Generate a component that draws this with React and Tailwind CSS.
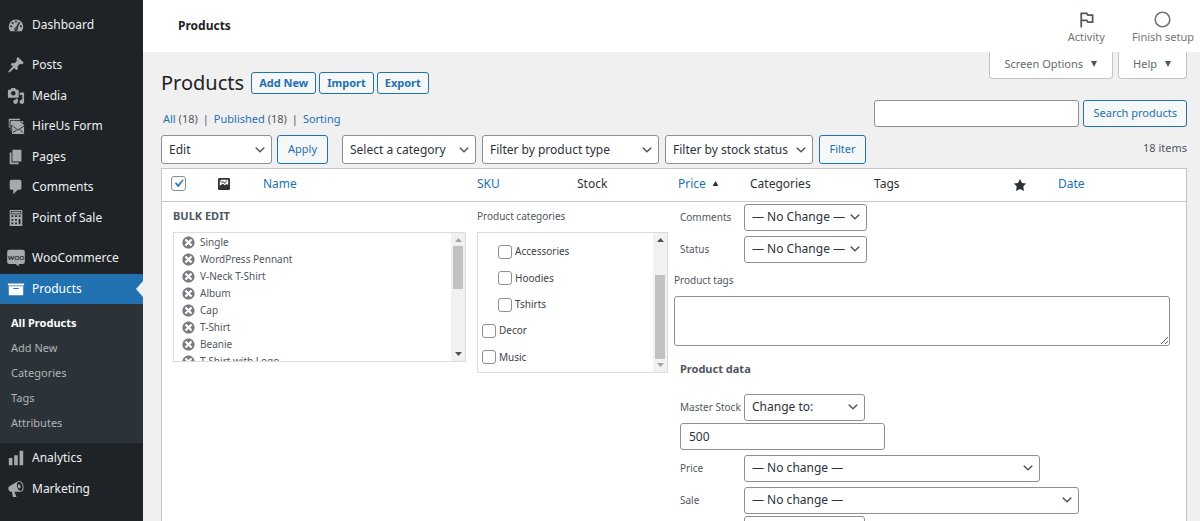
import React from "react";

const Svg = ({ className = "", children, box = "0 0 20 20" }) => (
  <svg viewBox={box} className={"shrink-0 " + className} fill="currentColor" aria-hidden="true">
    {children}
  </svg>
);

const icons = {
  dashboard: (
    <g>
      <path d="M3.760 17h12.480c1.100-1.370 1.760-3.110 1.760-5 0-4.420-3.580-8-8-8s-8 3.580-8 8c0 1.890.66 3.630 1.760 5z" />
      <g fill="#1d2327">
        <circle cx="10" cy="6.200" r="1.100" />
        <circle cx="6.300" cy="7.800" r="1.100" />
        <circle cx="4.600" cy="11.500" r="1.100" />
        <circle cx="15.400" cy="11.500" r="1.100" />
        <path d="M13.200 6.300l1.300.7-2.700 6.400a2 2 0 11-1.700-.9z" />
      </g>
      <circle cx="10" cy="14.300" r=".8" />
    </g>
  ),
  post: (
    <path d="M10.44 3.02l1.82-1.82 6.36 6.35-1.83 1.82c-1.05-.68-2.48-.57-3.41.36l-.75.75c-.92.93-1.04 2.35-.35 3.41l-1.83 1.82-2.41-2.41-2.8 2.79c-.42.42-3.38 2.71-3.8 2.29s1.86-3.39 2.28-3.81l2.79-2.79L4.1 9.36l1.83-1.82c1.05.69 2.48.57 3.4-.36l.75-.75c.93-.92 1.05-2.35.36-3.41z" />
  ),
  media: (
    <path d="M13 11V4c0-.55-.45-1-1-1h-1.67L9 1H5L3.67 3H2c-.55 0-1 .45-1 1v7c0 .55.45 1 1 1h10c.55 0 1-.45 1-1zM7 4.5c1.38 0 2.5 1.12 2.5 2.5S8.38 9.5 7 9.5 4.500 8.380 4.500 7 5.620 4.500 7 4.500zM14 6h5v10.500c0 1.380-1.120 2.500-2.500 2.500S14 17.880 14 16.500s1.120-2.500 2.500-2.500c.17 0 .34.02.5.05V9h-3V6zm-4 8.050V13h2v3.500c0 1.380-1.120 2.500-2.500 2.500S7 17.880 7 16.500 8.120 14 9.500 14c.17 0 .34.02.5.05z" />
  ),
  form: (
    <g>
      <path d="M2 2h12.500v2.500H18V8h1v11H5.500v-3.500H4V12H2z" />
      <g fill="none" stroke="#1d2327" strokeWidth="1">
        <path d="M3.500 12V4h11" />
        <path d="M5.500 15.500L5 9.500l4-2M15 4.500l3.500 4" />
        <path d="M7 10.500l5 4 7-4.500M6.500 17.500l4-3M18 17.500l-4-3.500" />
      </g>
      <path d="M4.500 5l3-1 9 6-4 3.500-8-6z" />
    </g>
  ),
  page: <path d="M6 15V2h10v13H6zm-1 1h8v2H3V5h2v11z" />,
  comments: (
    <path d="M5 2h9c1.1 0 2 .9 2 2v7c0 1.1-.9 2-2 2h-2l-5 5v-5H5c-1.1 0-2-.9-2-2V4c0-1.1.9-2 2-2z" />
  ),
  calculator: (
    <path
      fillRule="evenodd"
      d="M3 1h14v18H3zM4.200 2.200v3.600h11.600V2.200zM5 3h10v2H5zM5 7v2h2V7zm4 0v2h2V7zm4 0v2h2V7zM5 11v2h2v-2zm4 0v2h2v-2zm4 0v6h2v-6zM5 15v2h2v-2zm4 0v2h2v-2z"
    />
  ),
  woo: (
    <g>
      <path d="M2.500 .8h15a2.300 2.300 0 012.300 2.300v11.400a2.300 2.300 0 01-2.300 2.300h-4.700l.9 2.700-4.500-2.700H2.500A2.300 2.300 0 01.2 14.500V3.100A2.300 2.300 0 012.500.8z" />
      <text x="10" y="11.800" textAnchor="middle" fontSize="7" fontWeight="700" fill="#1d2327" fontFamily="Lato, sans-serif">
        WOO
      </text>
    </g>
  ),
  archive: <path d="M19 4v2H1V4h18zM2 7h16v10H2V7zm11 3V9H7v1h6z" />,
  chart: <path d="M18 18V2h-4v16h4zm-6 0V7H8v11h4zm-6 0v-8H2v8h4z" />,
  megaphone: (
    <path d="M18.15 5.94c.46 1.62.38 3.22-.02 4.48-.42 1.28-1.26 2.18-2.3 2.48-.16.06-.26.06-.4.06-.06.02-.12.02-.18.02-.06.02-.14.02-.22.02h-6.8l2.22 5.5c.02.14-.06.26-.14.34-.08.1-.24.16-.34.16H6.95c-.1 0-.26-.06-.34-.16-.08-.08-.16-.2-.14-.34l-1-5.5H4.25l-.02-.02c-.5.06-1.08-.18-1.54-.62s-.88-1.08-1.06-1.88c-.24-.8-.2-1.56-.02-2.2.18-.62.58-1.08 1.06-1.3l.02-.02 9-5.4c.1-.06.18-.1.24-.16.06-.04.14-.08.24-.12.16-.08.28-.12.5-.18 1.04-.3 2.24.1 3.22.98s1.84 2.24 2.26 3.86zm-2.58 5.98h-.02c.4-.1.74-.34 1.04-.7.58-.7.86-1.76.86-3.04 0-.64-.1-1.3-.28-1.98-.34-1.36-1.02-2.5-1.78-3.24s-1.68-1.1-2.46-.88c-.82.22-1.4.96-1.7 2-.32 1.04-.28 2.36.06 3.72.38 1.36 1 2.5 1.8 3.24.78.74 1.62 1.1 2.48.88zm-2.54-7.08c.22-.04.42-.02.62.04.38.16.76.48 1.02 1s.42 1.2.42 1.78c0 .3-.04.56-.12.8-.18.48-.44.84-.86.94-.34.1-.8-.06-1.14-.4s-.64-.86-.78-1.5c-.18-.62-.12-1.24.02-1.72s.48-.84.82-.94z" />
  ),
};

function NavItem({ icon, label, active }) {
  return (
    <a
      href="#"
      className={
        "relative flex flex-1 items-center gap-[7px] pl-[7px] text-[12px] " +
        (active ? "bg-[#2271b1] text-white" : "text-[#f0f0f1]")
      }
    >
      <Svg className={"size-[18px] " + (active ? "text-white" : "text-[#a7aaad]")}>{icons[icon]}</Svg>
      <span>{label}</span>
      {active && (
        <svg viewBox="0 0 7 16" className="absolute right-0 h-4 w-[7px]" aria-hidden="true">
          <path d="M7 0v16L0 8z" fill="#f0f0f1" />
        </svg>
      )}
    </a>
  );
}

function Sidebar() {
  return (
    <nav className="w-[143px] shrink-0 bg-[#1d2327] pt-[10px]">
      <div className="flex h-[30px] flex-col">
        <NavItem icon="dashboard" label="Dashboard" />
      </div>
      <div className="mt-[10px] flex h-[183px] flex-col">
        <NavItem icon="post" label="Posts" />
        <NavItem icon="media" label="Media" />
        <NavItem icon="form" label="HireUs Form" />
        <NavItem icon="page" label="Pages" />
        <NavItem icon="comments" label="Comments" />
        <NavItem icon="calculator" label="Point of Sale" />
      </div>
      <div className="mt-[10px] flex h-[61px] flex-col">
        <NavItem icon="woo" label="WooCommerce" />
        <NavItem icon="archive" label="Products" active />
      </div>
      <ul className="bg-[#2c3338] pt-[6px] pb-[8px] text-[11px] leading-[25px] text-[#b1b5b9]">
        <li>
          <a href="#" className="block pl-[11px] font-bold text-white">All Products</a>
        </li>
        {["Add New", "Categories", "Tags", "Attributes"].map((t) => (
          <li key={t}>
            <a href="#" className="block pl-[11px]">{t}</a>
          </li>
        ))}
      </ul>
      <div className="flex h-[61px] flex-col">
        <NavItem icon="chart" label="Analytics" />
        <NavItem icon="megaphone" label="Marketing" />
      </div>
    </nav>
  );
}

function Select({ id, label, value, className = "", height = "h-[27px]" }) {
  return (
    <span className={"relative inline-flex items-center " + height + " " + className}>
      <select
        id={id}
        aria-label={label}
        className="h-full w-full appearance-none rounded-[3px] border border-[#8c8f94] bg-white pr-5 pl-[7px] text-[12px] text-[#2c3338]"
      >
        <option>{value}</option>
      </select>
      <svg viewBox="0 0 20 20" className="pointer-events-none absolute right-[5px] size-[14px]" aria-hidden="true">
        <path d="M5 6l5 5 5-5 2 1-7 7-7-7 2-1z" fill="#50575e" />
      </svg>
    </span>
  );
}

const btn = "rounded-[3px] border border-[#2271b1] bg-[#f6f7f7] text-[11px] text-[#2271b1]";

function PageHeader() {
  return (
    <header className="flex h-[52px] shrink-0 items-center justify-between bg-white pr-[6px] pl-[35px]">
      <h2 className="text-[12px] font-bold text-[#1d2327]">Products</h2>
      <div className="flex gap-[27px] text-[11px] leading-[14px] text-[#757575]">
        <button className="flex flex-col items-center">
          <Svg box="0 0 24 24" className="size-[21px] text-[#50575e]">
            <path d="M14 6l-1-2H5v17h2v-7h5l1 2h7V6h-6zm4 8h-4l-1-2H7V6h5l1 2h5v6z" />
          </Svg>
          Activity
        </button>
        <button className="flex flex-col items-center">
          <svg viewBox="0 0 21 21" className="size-[21px]" aria-hidden="true">
            <circle cx="10.500" cy="10.500" r="7.300" fill="none" stroke="#757575" strokeWidth="1.600" />
          </svg>
          Finish setup
        </button>
      </div>
    </header>
  );
}

function MetaTab({ children }) {
  return (
    <button className="flex h-[27px] items-center gap-[7px] rounded-b-[4px] border border-t-0 border-[#c3c4c7] bg-white px-[14px] pb-[2px] text-[11px] text-[#646970]">
      {children}
      <svg viewBox="0 0 8 7" className="h-[6px] w-[8px]" aria-hidden="true">
        <path d="M.5 0h7L4 7z" fill="#50575e" />
      </svg>
    </button>
  );
}

function Heading() {
  return (
    <div className="flex items-start justify-between">
      <div className="pt-5">
        <div className="flex h-[22px] items-center gap-[7px]">
          <h1 className="text-[20px] leading-[22px] text-[#1d2327]">Products</h1>
          <div className="flex gap-[3px]">
            {["Add New", "Import", "Export"].map((t) => (
              <a key={t} href="#" className={btn + " flex h-[22px] items-center rounded-[2px] px-[7px] font-bold"}>
                {t}
              </a>
            ))}
          </div>
        </div>
        <ul className="mt-[16px] flex gap-[5px] pl-[2px] text-[11px] leading-[18px] text-[#50575e]">
          <li><a href="#" className="text-[#2271b1]">All</a> (18)</li>
          <li>|</li>
          <li><a href="#" className="text-[#2271b1]">Published</a> (18)</li>
          <li>|</li>
          <li><a href="#" className="text-[#2271b1]">Sorting</a></li>
        </ul>
      </div>
      <div className="flex flex-col items-end">
        <div className="flex gap-[5px]">
          <MetaTab>Screen Options</MetaTab>
          <MetaTab>Help</MetaTab>
        </div>
        <form className="mt-[21px] flex gap-1" onSubmit={(e) => e.preventDefault()}>
          <input
            type="search"
            aria-label="Search products"
            className="h-[27px] w-[205px] rounded-[3px] border border-[#8c8f94] bg-white px-2 text-[12px]"
          />
          <button className={btn + " h-[27px] px-[9px]"}>Search products</button>
        </form>
      </div>
    </div>
  );
}

function Filters() {
  return (
    <div className="mt-[7px] flex items-center">
      <Select label="Bulk action" value="Edit" className="w-[111px]" height="h-[29px]" />
      <button className={btn + " ml-[5px] h-[29px] w-[51px]"}>Apply</button>
      <div className="ml-[14px] flex gap-[6px]">
        <Select label="Category" value="Select a category" className="w-[134px]" height="h-[29px]" />
        <Select label="Product type" value="Filter by product type" className="w-[177px]" height="h-[29px]" />
        <Select label="Stock status" value="Filter by stock status" className="w-[148px]" height="h-[29px]" />
        <button className={btn + " h-[29px] w-[47px]"}>Filter</button>
      </div>
      <span className="ml-auto pb-[3px] text-[11px] text-[#50575e]">18 items</span>
    </div>
  );
}

const Triangle = ({ up, dark }) => (
  <svg viewBox="0 0 7 4" className="h-1 w-[7px] shrink-0" aria-hidden="true">
    <path d={up ? "M0 4h7L3.500 0z" : "M0 0h7L3.500 4z"} fill={dark ? "#505050" : "#a3a3a3"} />
  </svg>
);

function ScrollBar({ upDark, downDark, children }) {
  return (
    <div className="flex w-[14px] shrink-0 flex-col items-center bg-[#f1f1f1] pt-[5px] pb-[5px]">
      <Triangle up dark={upDark} />
      <div className="flex w-full flex-1 flex-col items-center py-1">{children}</div>
      <Triangle dark={downDark} />
    </div>
  );
}

const items = ["Single", "WordPress Pennant", "V-Neck T-Shirt", "Album", "Cap", "T-Shirt", "Beanie", "T-Shirt with Logo"];

function BulkList() {
  return (
    <div className="w-[293px] shrink-0">
      <h3 className="text-[11px] leading-[28px] font-bold text-[#50575e]">BULK EDIT</h3>
      <div className="mt-[2px] flex h-[130px] overflow-hidden border border-[#dcdcde]">
        <ul className="flex-1 overflow-hidden pt-px pl-[8px] text-[10px] leading-[17px] text-[#50575e]">
          {items.map((t) => (
            <li key={t} className="flex items-center gap-[5px]">
              <button aria-label={"Remove " + t} className="text-[#787c82]">
                <Svg className="size-[13px]" box="1.500 1.500 17 17">
                  <path d="M10 2c4.420 0 8 3.580 8 8s-3.580 8-8 8-8-3.580-8-8 3.580-8 8-8zm5 11l-3-3 3-3-2-2-3 3-3-3-2 2 3 3-3 3 2 2 3-3 3 3z" />
                </Svg>
              </button>
              {t}
            </li>
          ))}
        </ul>
        <ScrollBar downDark>
          <div className="h-[43px] w-[10px] bg-[#c1c1c1]" />
        </ScrollBar>
      </div>
    </div>
  );
}

const box = "shrink-0 appearance-none rounded-[3px] border border-[#8c8f94] bg-white";

function Categories() {
  return (
    <div className="w-[191px] shrink-0">
      <h3 className="text-[10px] leading-[28px] text-[#50575e]">Product categories</h3>
      <div className="mt-[2px] flex h-[141px] border border-[#dcdcde]">
        <ul className="flex flex-1 flex-col pt-[6px] pb-px text-[10px] text-[#3c434a]">
          {["Accessories", "Hoodies", "Tshirts", "Decor", "Music"].map((t, i) => (
            <li key={t} className={"flex flex-1 items-center " + (i < 3 ? "pl-[20px]" : "pl-[4px]")}>
              <label className="flex items-center gap-[3px]">
                <input type="checkbox" className={box + " size-[14px]"} />
                {t}
              </label>
            </li>
          ))}
        </ul>
        <ScrollBar upDark>
          <div className="mt-auto h-[84px] w-[10px] bg-[#c1c1c1]" />
        </ScrollBar>
      </div>
    </div>
  );
}

function Field({ id, label, value, width }) {
  return (
    <div className="flex items-center pl-[6px]">
      <label htmlFor={id} className="w-[64px] shrink-0 whitespace-nowrap">{label}</label>
      <Select id={id} value={value} className={width} />
    </div>
  );
}

function Fields() {
  return (
    <div className="min-w-0 flex-1 pt-[2px] pr-4 text-[10px] text-[#50575e]">
      <div className="flex flex-col gap-[5px]">
        <Field id="comments" label="Comments" value="— No Change —" width="w-[123px]" />
        <Field id="status" label="Status" value="— No Change —" width="w-[123px]" />
      </div>
      <label htmlFor="tags" className="mt-2 block leading-[18px]">Product tags</label>
      <textarea
        id="tags"
        className="mt-[7px] block h-[50px] w-full resize rounded-[3px] border border-[#8c8f94] bg-white p-1 text-[12px]"
      />
      <h4 className="mt-[14px] pl-[6px] text-[11px] leading-[18px] font-bold">Product data</h4>
      <div className="mt-4 flex flex-col gap-[5px]">
        <div className="flex flex-col gap-[2px]">
          <Field id="stock" label="Master Stock" value="Change to:" width="w-[121px]" />
          <input
            aria-label="Stock quantity"
            defaultValue="500"
            className="ml-[6px] h-[27px] w-[205px] rounded-[3px] border border-[#8c8f94] bg-white px-[8px] text-[12px] text-[#2c3338]"
          />
        </div>
        <Field id="price" label="Price" value="— No change —" width="w-[296px]" />
        <div className="flex flex-col gap-[2px]">
          <Field id="sale" label="Sale" value="— No change —" width="w-[335px]" />
          <Field id="tax" label="" value="— No change —" width="w-[121px]" />
        </div>
      </div>
    </div>
  );
}

function ProductTable() {
  const link = "text-[#2271b1]";
  return (
    <div className="mt-1 border border-[#c3c4c7] bg-white">
      <table className="w-full table-fixed text-left text-[12px] text-[#2c3338]">
        <colgroup>
          <col className="w-[48px]" />
          <col className="w-[45px]" />
          <col />
          <col className="w-[100px]" />
          <col className="w-[101px]" />
          <col className="w-[72px]" />
          <col className="w-[124px]" />
          <col className="w-[140px]" />
          <col className="w-[44px]" />
          <col className="w-[136px]" />
        </colgroup>
        <thead>
          <tr className="h-[32px] border-b border-[#c3c4c7] [&>th]:px-2 [&>th]:pb-[2px] [&>th]:font-normal">
            <th>
              <span className="relative ml-px flex size-[15px] items-center justify-center">
                <input type="checkbox" defaultChecked aria-label="Select all" className={box + " size-[15px]"} />
                <svg viewBox="0 0 20 20" className="pointer-events-none absolute size-[17px]" aria-hidden="true">
                  <path d="M14.830 4.890l1.340.94-5.810 8.380H9.020L5.780 9.670l1.340-1.250 2.570 2.400z" fill="#3582c4" />
                </svg>
              </span>
            </th>
            <th>
              <svg viewBox="0 0 20 20" className="size-[12px]" role="img" aria-label="Image">
                <rect width="20" height="20" rx="2" fill="#2c3338" />
                <path d="M3 3h14v8.500l-2.500-1.500-3 2-3.500-2.500L3 13z" fill="#fff" />
                <path d="M3 3l3.500 4.500L9 6l2 3 4-5" stroke="#2c3338" strokeWidth="1.500" fill="none" />
              </svg>
            </th>
            <th><a href="#" className={link}>Name</a></th>
            <th><a href="#" className={link}>SKU</a></th>
            <th>Stock</th>
            <th>
              <a href="#" className={link + " flex items-center gap-[6px]"}>
                Price
                <svg viewBox="0 0 7 6" className="h-[5px] w-[7px]" aria-hidden="true">
                  <path d="M0 6h7L3.500 0z" fill="#2c3338" />
                </svg>
              </a>
            </th>
            <th>Categories</th>
            <th>Tags</th>
            <th>
              <Svg className="mt-[2px] size-[12px]" box="1 1 18 18">
                <path d="M10 1l3 6 6 .750-4.120 4.620L16 19l-6-3-6 3 1.130-6.630L1 7.750 7 7z" />
              </Svg>
            </th>
            <th><a href="#" className={link}>Date</a></th>
          </tr>
        </thead>
        <tbody>
          <tr>
            <td colSpan={10} className="p-0">
              <div className="flex pl-[11px]">
                <BulkList />
                <div className="ml-[11px] flex min-w-0 flex-1 gap-[6px]">
                  <Categories />
                  <Fields />
                </div>
              </div>
            </td>
          </tr>
        </tbody>
      </table>
    </div>
  );
}

export default function App() {
  return (
    <div className="flex h-screen overflow-hidden bg-[#f0f0f1] font-['Noto_Sans','Open_Sans',sans-serif]">
      <Sidebar />
      <div className="flex min-w-0 flex-1 flex-col">
        <PageHeader />
        <main className="pr-[13px] pl-[18px]">
          <Heading />
          <Filters />
          <ProductTable />
        </main>
      </div>
    </div>
  );
}
